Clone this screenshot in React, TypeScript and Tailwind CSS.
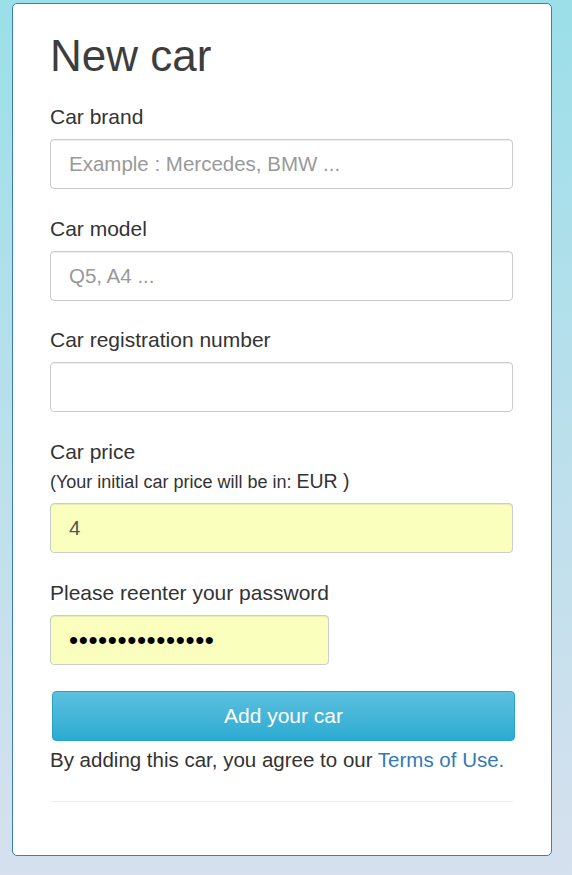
import React from "react";

const FONT = "font-['Liberation_Sans',Arial,sans-serif]";

const INPUT_CLASS =
  "block h-[50px] w-full rounded-[4px] border border-[#ccc] px-[18px] text-[20.5px] text-[#555] shadow-[inset_0_1px_1px_rgba(0,0,0,0.075)] outline-none placeholder:text-[#999]";

type FieldProps = {
  label: string;
  placeholder?: string;
  spacing: string;
};

function Field({ label, placeholder, spacing }: FieldProps) {
  return (
    <div className={spacing}>
      <label className="block text-[21px] leading-[30px] text-[#333]">
        {label}
      </label>
      <input
        type="text"
        placeholder={placeholder}
        className={`mt-[7px] bg-white ${INPUT_CLASS}`}
      />
    </div>
  );
}

export default function App() {
  return (
    <div
      className={`${FONT} min-h-[875px] w-full bg-linear-to-b from-[#9bdfe9] to-[#d6e0ee] pt-[3px]`}
    >
      <form
        className="ml-[12px] w-[540px] rounded-[5px] border border-[#3a7ec0] bg-white pb-[53px] pl-[37px] pr-[38px] pt-[27px]"
        onSubmit={(e) => e.preventDefault()}
      >
        <h1 className="text-[44px] leading-[50px] text-[#3d3d3d]">New car</h1>

        <Field
          label="Car brand"
          placeholder="Example : Mercedes, BMW ..."
          spacing="mt-[21px]"
        />
        <Field label="Car model" placeholder="Q5, A4 ..." spacing="mt-[25px]" />
        <Field label="Car registration number" spacing="mt-[24px]" />

        {/* price: label + hint line */}
        <div className="mt-[25px]">
          <label className="block text-[21px] leading-[30px] text-[#333]">
            Car price
          </label>
          <div className="mt-[2px] whitespace-nowrap text-[18px] leading-[24px] text-[#333]">
            (Your initial car price will be in:{" "}
            <span className="text-[19.5px]">EUR )</span>
          </div>
          <input
            type="text"
            defaultValue="4"
            className={`mt-[9px] bg-[#faffbd] ${INPUT_CLASS}`}
          />
        </div>

        <div className="mt-[25px]">
          <label className="block text-[21px] leading-[30px] text-[#333]">
            Please reenter your password
          </label>
          <input
            type="password"
            defaultValue="aaaaaaaaaaaaaaa"
            className={`mt-[7px] bg-[#faffbd] ${INPUT_CLASS} !w-[279px] !text-[26px] tracking-[0.6px] !text-black`}
          />
        </div>

        <button
          type="submit"
          className="ml-[2px] mt-[26px] block h-[50px] w-[463px] rounded-[4px] border border-[#28a4c9] bg-linear-to-b from-[#5bc0de] to-[#2aabd2] text-[21px] text-white"
        >
          Add your car
        </button>
        <p className="mt-[4px] whitespace-nowrap text-[20.5px] leading-[30px] text-[#333]">
          By adding this car, you agree to our{" "}
          <a href="#" className="text-[#337ab7]">
            Terms of Use.
          </a>
        </p>

        <hr className="mt-[26px] border-t border-[#eee]" />
      </form>
    </div>
  );
}
